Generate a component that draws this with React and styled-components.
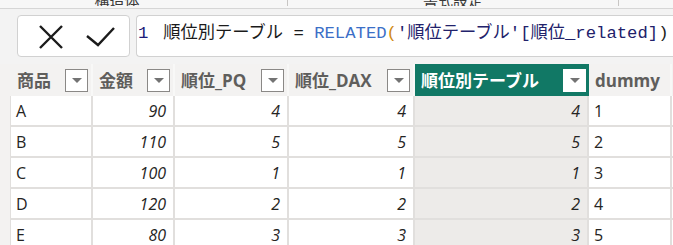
import styled, { createGlobalStyle } from "styled-components";

const GlobalStyle = createGlobalStyle`
  html, body { margin: 0; padding: 0; }
  body {
    width: 673px;
    height: 245px;
    overflow: hidden;
    background: #f3f3f3;
    font-family: "Open Sans", "Noto Sans CJK JP", sans-serif;
  }
`;

// table data
const columns = [
  { key: "name", label: "商品", width: 82 },
  { key: "amount", label: "金額", width: 82 },
  { key: "pq", label: "順位_PQ", width: 114 },
  { key: "dax", label: "順位_DAX", width: 126 },
  { key: "rel", label: "順位別テーブル", width: 174, active: true },
  { key: "dummy", label: "dummy", width: 83, plain: true },
];

const rows = [
  { name: "A", amount: 90, pq: 4, dax: 4, rel: 4, dummy: 1 },
  { name: "B", amount: 110, pq: 5, dax: 5, rel: 5, dummy: 2 },
  { name: "C", amount: 100, pq: 1, dax: 1, rel: 1, dummy: 3 },
  { name: "D", amount: 120, pq: 2, dax: 2, rel: 2, dummy: 4 },
  { name: "E", amount: 80, pq: 3, dax: 3, rel: 3, dummy: 5 },
];

const App = () => {
  return (
    <Page>
      <GlobalStyle />
      <Ribbon>
        <RibbonGroup $width={340} $offset={-53}>
          <RibbonLabel>構造体</RibbonLabel>
        </RibbonGroup>
        <RibbonGroup $width={330}>
          <RibbonLabel>書式設定</RibbonLabel>
        </RibbonGroup>
      </Ribbon>

      <FormulaBar>
        <Actions>
          <svg width="26" height="24" viewBox="0 0 26 24">
            <path d="M2 1 L24 23 M24 1 L2 23" stroke="#1b1b1b" strokeWidth="2.4" fill="none" />
          </svg>
          <svg width="30" height="20" viewBox="0 0 30 20">
            <path d="M1 9 L12 18 L28 1" stroke="#1b1b1b" strokeWidth="2.4" fill="none" />
          </svg>
        </Actions>
        <Editor>
          <LineNo>1</LineNo>
          <Code>
            順位別テーブル = <Fn>RELATED</Fn>
            <Paren>(</Paren>
            <Ref>'順位テーブル'[順位_related]</Ref>)
          </Code>
        </Editor>
      </FormulaBar>

      <Table>
        <HeaderRow>
          {columns.map((c) => (
            <HeadCell key={c.key} $width={c.width} $active={c.active}>
              <HeadLabel $active={c.active}>{c.label}</HeadLabel>
              {!c.plain && (
                <Dropdown $active={c.active}>
                  <Caret />
                </Dropdown>
              )}
            </HeadCell>
          ))}
          <HeadCell $width={40} />
        </HeaderRow>
        {rows.map((r) => (
          <Row key={r.name}>
            {columns.map((c) => {
              const isText = c.key === "name" || c.key === "dummy";
              return (
                <Cell key={c.key} $width={c.width} $active={c.active} $num={!isText}>
                  {r[c.key]}
                </Cell>
              );
            })}
            <Cell $width={40} />
          </Row>
        ))}
      </Table>
    </Page>
  );
};

const Page = styled.div`
  width: 673px;
  height: 245px;
  overflow: hidden;
`;

const Ribbon = styled.div`
  display: flex;
  height: 8px;
  background: #f7f7f7;
  border-bottom: 1px solid #d6d6d6;
  overflow: hidden;
`;

const RibbonGroup = styled.div`
  flex: none;
  width: ${(p) => p.$width}px;
  margin-left: ${(p) => p.$offset || 0}px;
  height: 6px;
  display: flex;
  align-items: flex-end;
  justify-content: center;
  border-right: 1px solid #c8c6c4;
  overflow: hidden;
`;

const RibbonLabel = styled.span`
  font-size: 15px;
  line-height: 15px;
  color: #3b3a39;
  margin-bottom: -2px;
`;

const FormulaBar = styled.div`
  display: flex;
  gap: 6px;
  padding: 6px 0 0 17px;
  height: 42px;
`;

const Actions = styled.div`
  flex: none;
  width: 113px;
  height: 42px;
  box-sizing: border-box;
  background: #fff;
  border: 1px solid #d1d1d1;
  border-radius: 4px;
  display: flex;
  align-items: center;
  justify-content: center;
  gap: 22px;
  padding: 1px 0 0 7px;
`;

const Editor = styled.div`
  flex: 1;
  height: 42px;
  box-sizing: border-box;
  background: #fff;
  border: 1px solid #d1d1d1;
  border-right: none;
  border-radius: 4px 0 0 4px;
  display: flex;
  align-items: flex-start;
  padding: 8px 0 0 1px;
  white-space: nowrap;
  font-family: "Liberation Mono", "Noto Sans CJK JP", monospace;
  font-size: 17.25px;
  line-height: 20px;
  color: #1b1b1b;
`;

const LineNo = styled.span`
  color: #1c1c7a;
  margin-right: 15px;
`;

const Code = styled.span``;

const Fn = styled.span`
  color: #3b6fc7;
`;

const Paren = styled.span`
  color: #d08a12;
`;

const Ref = styled.span`
  color: #22226b;
`;

const Table = styled.div`
  margin-top: 7px;
  padding-left: 11px;
  background: #f3f2f1;
`;

const HeaderRow = styled.div`
  display: flex;
  height: 32px;
`;

const HeadCell = styled.div`
  flex: none;
  width: ${(p) => p.$width}px;
  box-sizing: border-box;
  display: flex;
  align-items: center;
  justify-content: space-between;
  padding: 1px ${(p) => (p.$active ? 1 : 3)}px 0 6px;
  background: ${(p) => (p.$active ? "#117865" : "#f3f2f1")};
  border-right: 2px solid ${(p) => (p.$active ? "#117865" : "#f8f8f7")};
`;

const HeadLabel = styled.span`
  font-size: 17px;
  line-height: 20px;
  font-weight: 700;
  color: ${(p) => (p.$active ? "#ffffff" : "#5f5e5c")};
  white-space: nowrap;
`;

const Dropdown = styled.div`
  width: 23px;
  height: 23px;
  box-sizing: border-box;
  background: #fff;
  border: 1px solid ${(p) => (p.$active ? "#ffffff" : "#8a8886")};
  display: flex;
  justify-content: center;
  padding-top: 8px;
`;

const Caret = styled.div`
  width: 0;
  height: 0;
  border-left: 5px solid transparent;
  border-right: 5px solid transparent;
  border-top: 5px solid #737373;
`;

const Row = styled.div`
  display: flex;
  height: 31px;
  background: #fff;
  border-left: 1px solid #e1dfdd;
  margin-left: -1px;
`;

const Cell = styled.div`
  flex: none;
  width: ${(p) => p.$width}px;
  box-sizing: border-box;
  display: flex;
  align-items: center;
  justify-content: ${(p) => (p.$num ? "flex-end" : "flex-start")};
  padding: 0 7px 0 5px;
  border-right: 2px solid #e1dfdd;
  border-bottom: 2px solid #e1dfdd;
  background: ${(p) => (p.$active ? "#edebe9" : "#ffffff")};
  font-size: 16px;
  font-style: ${(p) => (p.$num ? "italic" : "normal")};
  color: #252423;
`;

export default App;
